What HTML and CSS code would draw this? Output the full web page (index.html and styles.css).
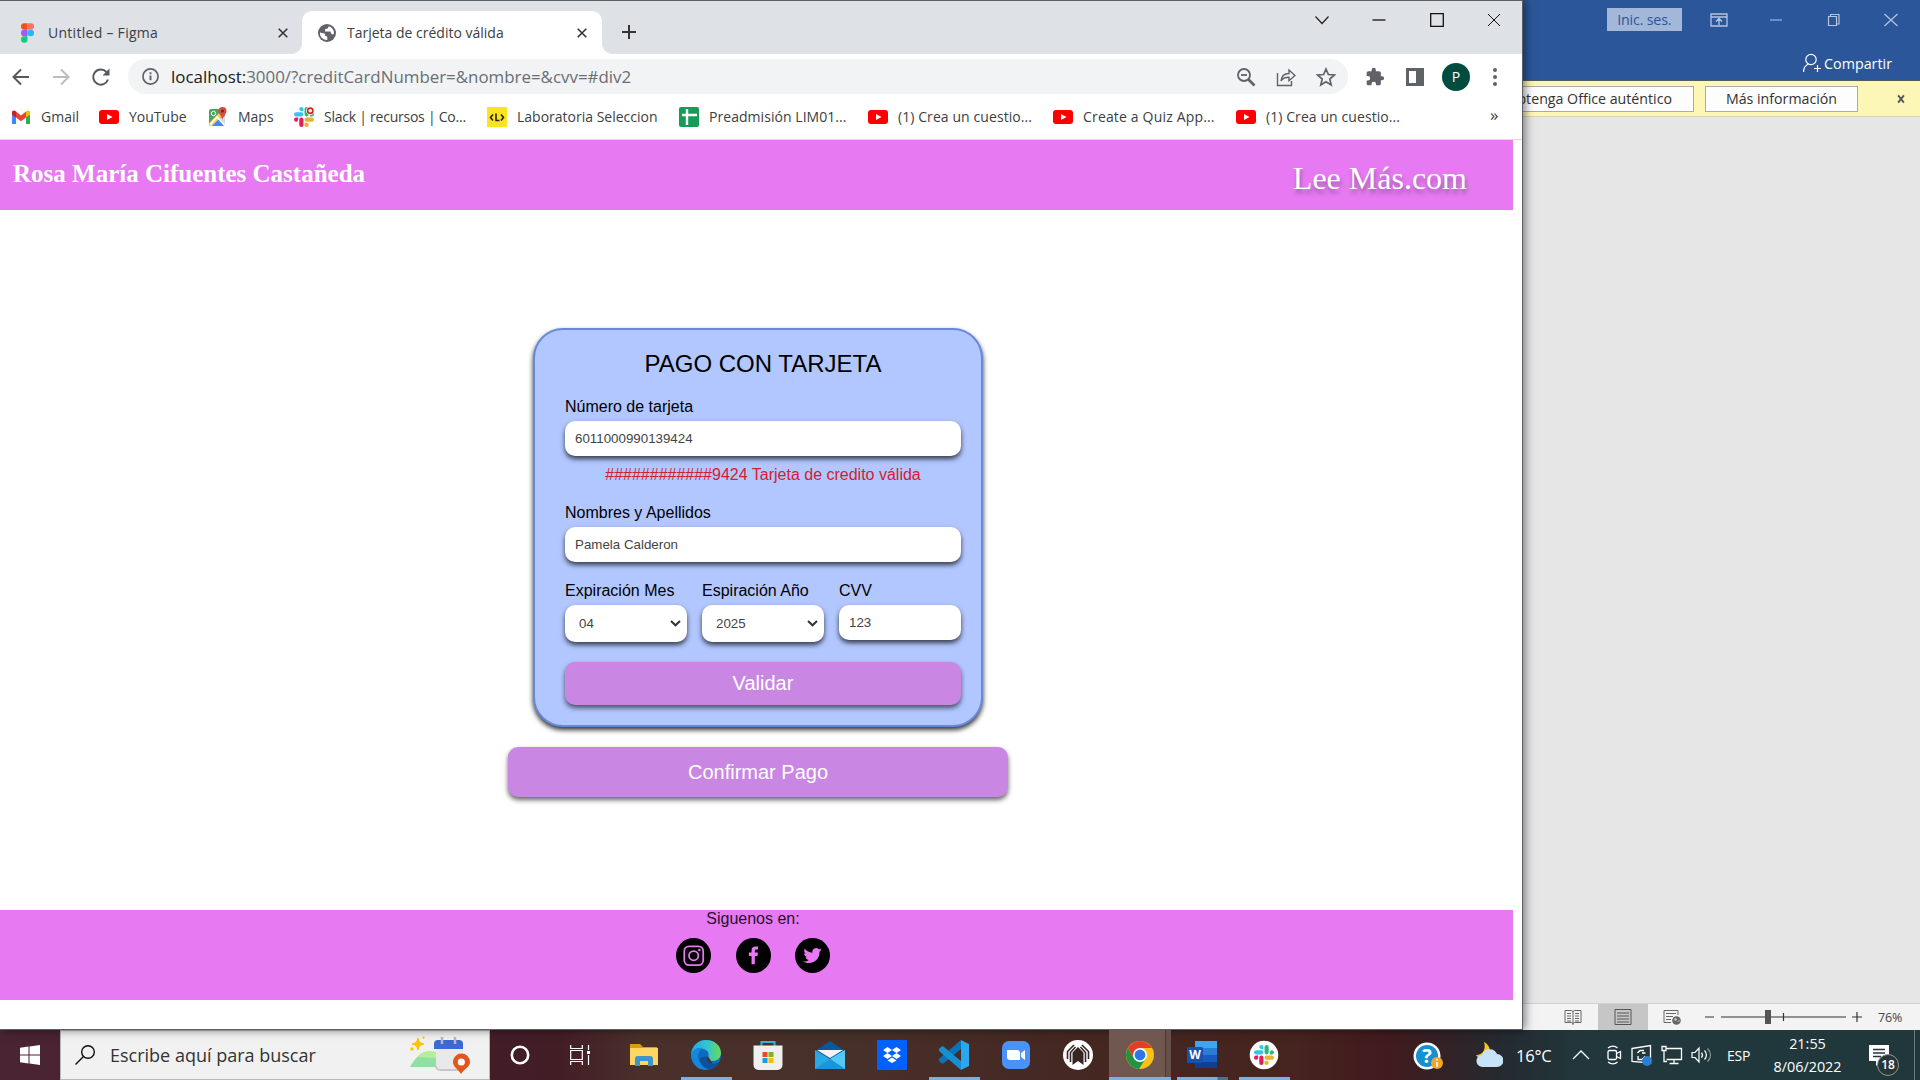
FILE: index.html
```html
<!DOCTYPE html>
<html lang="es">
<head>
<meta charset="utf-8">
<title>Tarjeta de crédito válida</title>
<link rel="stylesheet" href="styles.css">
</head>
<body>
<svg class="sprite" aria-hidden="true">
  <symbol id="close" viewBox="0 0 14 14"><path d="M1 1l12 12M13 1L1 13" fill="none" stroke="currentColor"/></symbol>
  <symbol id="youtube" viewBox="0 0 20 20"><rect y="3" width="20" height="14" rx="3" fill="#f00"/><path d="M8 7l5.5 3L8 13z" fill="#fff"/></symbol>
  <symbol id="slack" viewBox="0 0 24 24">
    <path fill="#e01e5a" d="M5.042 15.165a2.528 2.528 0 0 1-2.52 2.523A2.528 2.528 0 0 1 0 15.165a2.527 2.527 0 0 1 2.522-2.52h2.52v2.52zM6.313 15.165a2.527 2.527 0 0 1 2.521-2.52 2.527 2.527 0 0 1 2.521 2.520v6.313A2.528 2.528 0 0 1 8.834 24a2.528 2.528 0 0 1-2.521-2.522v-6.313z"/>
    <path fill="#36c5f0" d="M8.834 5.042a2.528 2.528 0 0 1-2.521-2.520A2.528 2.528 0 0 1 8.834 0a2.528 2.528 0 0 1 2.521 2.522v2.520H8.834zM8.834 6.313a2.528 2.528 0 0 1 2.521 2.521 2.528 2.528 0 0 1-2.521 2.521H2.522A2.528 2.528 0 0 1 0 8.834a2.528 2.528 0 0 1 2.522-2.521h6.312z"/>
    <path fill="#2eb67d" d="M18.956 8.834a2.528 2.528 0 0 1 2.522-2.521A2.528 2.528 0 0 1 24 8.834a2.528 2.528 0 0 1-2.522 2.521h-2.522V8.834zM17.688 8.834a2.528 2.528 0 0 1-2.523 2.521 2.527 2.527 0 0 1-2.520-2.521V2.522A2.527 2.527 0 0 1 15.165 0a2.528 2.528 0 0 1 2.523 2.522v6.312z"/>
    <path fill="#ecb22e" d="M15.165 18.956a2.528 2.528 0 0 1 2.523 2.522A2.528 2.528 0 0 1 15.165 24a2.527 2.527 0 0 1-2.520-2.522v-2.522h2.520zM15.165 17.688a2.527 2.527 0 0 1-2.520-2.523 2.526 2.526 0 0 1 2.520-2.520h6.313A2.527 2.527 0 0 1 24 15.165a2.528 2.528 0 0 1-2.522 2.523h-6.313z"/>
  </symbol>
</svg>

<div class="desktop">
  <main class="workspace">

    <section class="word">
      <header class="word-title">
        <div class="word-controls">
          <span class="signin">Inic. ses.</span>
          <svg class="wc" viewBox="0 0 18 14"><path d="M1 1h16v12H1zM1 4h16M9 12V6M6 8.500l3-3 3 3" fill="none" stroke="currentColor" stroke-width="1.300"/></svg>
          <svg class="wc" viewBox="0 0 18 14"><path d="M3 7h12" stroke="currentColor"/></svg>
          <svg class="wc" viewBox="0 0 18 14"><path d="M3.500 3.500h8v9h-8zM5.500 3V1.500h8.500V11h-2" fill="none" stroke="currentColor" stroke-width="1.200"/></svg>
          <svg class="wc" viewBox="0 0 18 14"><path d="M2.500 1l13 12M15.500 1l-13 12" stroke="currentColor" stroke-width="1.200"/></svg>
        </div>
        <div class="share">
          <svg width="20" height="20" viewBox="0 0 20 20" fill="none" stroke="#fff" stroke-width="1.200"><circle cx="9" cy="6.500" r="5.200"/><path d="M6.500 11C3 12.500 1.500 15 1.500 19M12 15.500h7M15.500 12v7"/></svg>
          Compartir
        </div>
      </header>
      <div class="license">
        <span class="license-btn wide">Obtenga Office auténtico</span>
        <span class="license-btn">Más información</span>
        <svg class="license-close" viewBox="0 0 14 14"><path d="M3 2l8 10M11 2L3 12" stroke="#555" stroke-width="2.600"/></svg>
      </div>
      <div class="document"></div>
      <footer class="word-status">
        <span class="view"><svg viewBox="0 0 18 16"><path d="M1 1.500h6.500L9 2.500l1.500-1H17v12h-6.500L9 14.500l-1.500-1H1zM9 2v14M3 4.500h4M3 7h4M3 9.500h4M3 12h4M11 4.500h4M11 7h4M11 9.500h4M11 12h4" fill="none" stroke="#666"/></svg></span>
        <span class="view active"><svg viewBox="0 0 18 16"><path d="M1 .500h16v15H1zM3 4h12M3 7h12M3 10h12M3 13h12" fill="none" stroke="#555"/></svg></span>
        <span class="view"><svg viewBox="0 0 18 16"><path d="M15 6V1.500H1v12h7M3 4.500h10M3 7.500h7M3 10.500h5" fill="none" stroke="#666"/><circle cx="13.500" cy="11.500" r="4.300" fill="#666"/><path d="M11 10l2-1 1 2-2 1zM14 13l2-2 1 1" fill="#ccc"/></svg></span>
        <svg class="slider" width="160" height="18" viewBox="0 0 160 18"><path d="M1 9h9M17 9h125M148 9h10M153 4v10M79.500 5v8" stroke="#333" stroke-width="1.200"/><rect x="61" y="2" width="6" height="14" fill="#555"/></svg>
        <span class="percent">76%</span>
      </footer>
    </section>

    <section class="chrome">
      <header class="tabs">
        <div class="tab">
          <svg class="favicon figma" width="13" height="20" viewBox="0 0 12 18"><path d="M3 0h3v6H3a3 3 0 010-6z" fill="#f24e1e"/><path d="M6 0h3a3 3 0 010 6H6z" fill="#ff7262"/><path d="M3 6h3v6H3a3 3 0 010-6z" fill="#a259ff"/><circle cx="9" cy="9" r="3" fill="#1abcfe"/><path d="M3 12h3v3a3 3 0 11-3-3z" fill="#0acf83"/></svg>
          <span class="tab-title">Untitled – Figma</span>
          <svg class="tab-close"><use href="#close"/></svg>
        </div>
        <div class="tab active">
          <svg class="favicon" width="18" height="18" viewBox="0 0 20 20"><circle cx="10" cy="10" r="10" fill="#5f6368"/><path d="M2.300 9.500l5.500 1.200v2.200l2.500 1.300v3.500C5.500 18 1.500 14 2.300 9.500zM12 2.500l-1 2.300-3.200 1v2.400h6l1.200 3.100h2.500c1-3.500-1.500-7.500-5.500-8.800z" fill="#fff"/></svg>
          <span class="tab-title">Tarjeta de crédito válida</span>
          <svg class="tab-close"><use href="#close"/></svg>
        </div>
        <svg class="new-tab" viewBox="0 0 16 16"><path d="M8 1v14M1 8h14" stroke="#333" stroke-width="2"/></svg>
        <div class="window-controls">
          <svg viewBox="0 0 14 14"><path d="M.5 3.500L7 10.500l6.500-7" fill="none" stroke="#222" stroke-width="1.200"/></svg>
          <svg viewBox="0 0 14 14"><path d="M.5 7h13" stroke="#111" stroke-width="1.300"/></svg>
          <svg viewBox="0 0 14 14"><path d="M.7.700h12.600v12.600H.7z" fill="none" stroke="#111" stroke-width="1.300"/></svg>
          <svg viewBox="0 0 14 14"><use href="#close" color="#111"/></svg>
        </div>
      </header>

      <nav class="toolbar">
        <div class="nav-buttons">
          <svg viewBox="0 0 20 20"><path d="M18 10H3M10 2.500L2.500 10l7.500 7.500" fill="none" stroke="#555a5f" stroke-width="2"/></svg>
          <svg viewBox="0 0 20 20"><path d="M2 10h15M10 2.500l7.500 7.500-7.500 7.500" fill="none" stroke="#babcbe" stroke-width="2"/></svg>
          <svg viewBox="0 0 20 20"><path d="M17 12.500A7.600 7.600 0 1115.500 5" fill="none" stroke="#555a5f" stroke-width="2"/><path d="M18.500 1.500v7h-7z" fill="#555a5f"/></svg>
        </div>
        <div class="omnibox">
          <svg width="17" height="17" viewBox="0 0 18 18"><circle cx="9" cy="9" r="8" fill="none" stroke="#5f6368" stroke-width="1.800"/><path d="M9 8v5M9 4.500v2" stroke="#5f6368" stroke-width="2"/></svg>
          <span class="url"><b>localhost:</b>3000/?creditCardNumber=&amp;nombre=&amp;cvv=#div2</span>
          <div class="omni-icons">
            <svg viewBox="0 0 20 20"><g fill="none" stroke="#5f6368" stroke-width="1.800"><circle cx="8" cy="8" r="6"/><path d="M5 8h6"/></g><path d="M12.500 12.500l6 6" stroke="#5f6368" stroke-width="2.600"/></svg>
            <svg viewBox="0 0 20 20"><path d="M1.500 6v12.500h14V14M5 14c.500-5 3-7.500 8-7.500V3l6 5.500-6 5.200v-3.500c-4 0-6.500 1-8 3.800z" fill="none" stroke="#5f6368" stroke-width="1.400"/></svg>
            <svg viewBox="0 0 20 20"><path d="M10 2l2.400 5.500 6 .5-4.600 4 1.400 6-5.200-3.200L4.800 18l1.400-6-4.600-4 6-.5z" fill="none" stroke="#5f6368" stroke-width="1.700"/></svg>
          </div>
        </div>
        <div class="extensions">
          <svg width="20" height="20" viewBox="0 0 24 24"><path d="M20.500 11H19V7a2 2 0 00-2-2h-4V3.500a2.500 2.500 0 00-5 0V5H4a2 2 0 00-2 2v3.800h1.500a2.700 2.700 0 010 5.400H2V20a2 2 0 002 2h3.800v-1.500a2.700 2.700 0 015.400 0V22H17a2 2 0 002-2v-4h1.500a2.500 2.500 0 000-5z" fill="#5f6368"/></svg>
          <svg width="18" height="18" viewBox="0 0 18 18"><path d="M0 0h18v18H0zM3 3v12h7V3z" fill="#5f6368" fill-rule="evenodd"/></svg>
          <span class="avatar">P</span>
          <svg class="dots" width="4" height="18" viewBox="0 0 4 18"><g fill="#5f6368"><circle cx="2" cy="2" r="2"/><circle cx="2" cy="9" r="2"/><circle cx="2" cy="16" r="2"/></g></svg>
        </div>
      </nav>

      <nav class="bookmarks">
        <a class="bm gmail"><svg viewBox="0 0 20 20"><path d="M1 4v13h4V9z" fill="#4285f4"/><path d="M15 9v8h4V4z" fill="#34a853"/><path d="M5 4.500v6l5 3.700 5-3.700v-6l-5 4z" fill="#ea4335"/><path d="M1 5.500v2L5 10.500v-6C3 2.500 1 3.500 1 5.500z" fill="#c5221f"/><path d="M19 5.500v2l-4 3v-6c2-2 4-1 4 1z" fill="#fbbc04"/></svg><span>Gmail</span></a>
        <a class="bm yt"><svg><use href="#youtube"/></svg><span>YouTube</span></a>
        <a class="bm maps"><svg viewBox="0 0 20 20"><rect x="1" y="2" width="16" height="17" rx="2" fill="#4fa35e"/><path d="M3 19l7-7 7 7z" fill="#4b86ec"/><path d="M1 16L14 3l3 3L4 19H2z" fill="#f5d25c"/><path d="M10 12l7 7V9z" fill="#dadde0"/><path d="M2 18l7-8 8 9" fill="none" stroke="#fff" stroke-width="1.500"/><circle cx="5.500" cy="6.500" r="2.200" fill="none" stroke="#fff"/><path d="M14.500 0a4 4 0 014 4c0 3-3 5-4 8.500C13.500 9 10.500 7 10.500 4a4 4 0 014-4z" fill="#dc4b3f"/><circle cx="14.500" cy="4" r="1.500" fill="#7d221c"/></svg><span>Maps</span></a>
        <a class="bm slk"><svg viewBox="0 0 24 24"><use href="#slack"/><circle cx="19.500" cy="4.500" r="5" fill="#fff"/><circle cx="19.500" cy="4.500" r="3.200" fill="#fff" stroke="#e02020" stroke-width="2"/></svg><span>Slack | recursos | Co...</span></a>
        <a class="bm lab"><svg viewBox="0 0 20 20"><path d="M0 0h20v20H0z" fill="#fbe41e"/><path d="M6 7.500L3.500 10.500 6 13.500M14 7.500l2.500 3-2.500 3M9 6.500v7h3.500" fill="none" stroke="#222" stroke-width="1.600"/></svg><span>Laboratoria Seleccion</span></a>
        <a class="bm sheet"><svg viewBox="0 0 20 20"><rect width="20" height="20" rx="2" fill="#179c58"/><path d="M8 2v16M3 8h15" stroke="#fff" stroke-width="2.400"/></svg><span>Preadmisión LIM01...</span></a>
        <a class="bm quiz1"><svg><use href="#youtube"/></svg><span>(1) Crea un cuestio...</span></a>
        <a class="bm quiz2"><svg><use href="#youtube"/></svg><span>Create a Quiz App...</span></a>
        <a class="bm quiz3"><svg><use href="#youtube"/></svg><span>(1) Crea un cuestio...</span></a>
        <span class="more">»</span>
      </nav>

      <div class="page">
        <header class="site-header">
          <h1 class="owner">Rosa María Cifuentes Castañeda</h1>
          <p class="brand">Lee Más.com</p>
        </header>
        <div class="payment">
          <form class="card">
            <h2 class="card-title">PAGO CON TARJETA</h2>
            <label class="row"><span>Número de tarjeta</span><input class="field" value="6011000990139424"></label>
            <p class="message">############9424 Tarjeta de credito válida</p>
            <label class="row"><span>Nombres y Apellidos</span><input class="field" value="Pamela Calderon"></label>
            <div class="expiry">
              <label><span>Expiración Mes</span><select class="field select"><option>04</option></select></label>
              <label><span>Espiración Año</span><select class="field select"><option>2025</option></select></label>
              <label><span>CVV</span><input class="field" value="123"></label>
            </div>
            <button class="btn validate" type="button">Validar</button>
          </form>
          <button class="btn confirm" type="button">Confirmar Pago</button>
        </div>
        <footer class="site-footer">
          <p>Siguenos en:</p>
          <div class="social">
            <svg viewBox="0 0 36 36"><circle cx="18" cy="18" r="18"/><g fill="none" stroke="#e77af2" stroke-width="1.800"><rect x="8.500" y="8.500" width="19.500" height="19.500" rx="5"/><circle cx="18.200" cy="18.200" r="4.800"/></g><circle cx="24" cy="12.400" r="1.300" fill="#e77af2"/></svg>
            <svg viewBox="0 0 36 36"><circle cx="18" cy="18" r="18"/><path d="M16 27v-8.500h-2.800V15H16v-2.500c0-2.500 1.500-3.800 4-3.800h2.600v3.200H21c-1.200 0-1.600.5-1.600 1.500V15h3.200l-.5 3.500h-2.700V27z" fill="#e77af2"/></svg>
            <svg viewBox="0 0 36 36"><circle cx="18" cy="18" r="18"/><path d="M27.500 12.200c-.7.300-1.400.5-2.200.6.800-.5 1.400-1.200 1.700-2.100-.8.400-1.600.8-2.500.9a3.900 3.900 0 00-6.600 3.500c-3.200-.2-6-1.700-7.900-4-1 1.700-.6 4 1.100 5.200-.6 0-1.200-.2-1.700-.5 0 1.800 1.200 3.500 3.100 3.900-.6.200-1.200.2-1.800.1.500 1.500 1.900 2.600 3.600 2.700a7.800 7.800 0 01-5.700 1.600c6.900 4.300 16.800 0 16.700-9.900.8-.6 1.500-1.200 2.200-2z" fill="#e77af2"/></svg>
          </div>
        </footer>
      </div>
    </section>
  </main>

  <footer class="taskbar">
    <div class="start"><svg width="20" height="20" viewBox="0 0 20 20"><path d="M0 2.800l8.500-1.200v8H0zM9.500 1.500L20 0v9.500H9.500zM0 10.500h8.500v8L0 17.300zM9.500 10.500H20V20l-10.500-1.500z" fill="#fff"/></svg></div>
    <div class="search">
      <svg width="20" height="20" viewBox="0 0 20 20"><circle cx="13" cy="7" r="6.300" fill="none" stroke="#111" stroke-width="1.400"/><path d="M8.500 11.500L.5 19.500" stroke="#111" stroke-width="1.400"/></svg>
      <span>Escribe aquí para buscar</span>
      <svg class="highlight" width="62" height="40" viewBox="0 0 62 40">
        <path d="M9 3l1.600 4.400L15 9l-4.400 1.600L9 15l-1.600-4.400L3 9l4.400-1.600z" fill="#ffc400" stroke="#ffc400"/><circle cx="3" cy="14" r="1.700" fill="#ffc400"/><circle cx="14.500" cy="2.500" r="1.200" fill="#f5c95b"/>
        <path d="M1 32c6-10 12-18 26-15v15z" fill="#91dfa3"/><path d="M8 22c6-6 12-7 20-4v5z" fill="#b4ef9c"/>
        <rect x="27" y="7" width="27" height="28" rx="4" fill="#e9e9eb"/><path d="M27 31v0a4 4 0 004 4h19" stroke="#c8c8ca" stroke-width="2" fill="none"/><path d="M25 14V9a4 4 0 014-4h21a4 4 0 014 4v5z" fill="#3d68d8"/><path d="M33 2v7M46 2v7" stroke="#b4b8c4" stroke-width="2.500"/>
        <path d="M52 39c-3-5-8-7-8-12a8.500 8.500 0 0117 0c0 5-6 7-9 12z" fill="#e2561b"/><circle cx="52.300" cy="27" r="3.600" fill="#fff"/>
      </svg>
    </div>
    <div class="apps">
      <span class="app cortana"><svg width="20" height="20" viewBox="0 0 20 20"><circle cx="10" cy="10" r="8.200" fill="none" stroke="#fff" stroke-width="2.600"/></svg></span>
      <span class="app taskview"><svg width="20" height="20" viewBox="0 0 20 20"><path d="M.7 0v3.500h11.600V0M.7 20v-3.500h11.600V20M.7 5.500h11.600v9H.7zM18.500 0v5M18.500 10v10" fill="none" stroke="#fff" stroke-width="1.200"/><rect x="17" y="6" width="3" height="3" fill="#fff"/></svg></span>
      <span class="app"><svg viewBox="0 0 30 30"><path d="M1 4h10l3 3h14v5H1z" fill="#dc9c11"/><path d="M1 8h28v17H1z" fill="#fdd663"/><path d="M6 26v-7a3 3 0 013-3h12a3 3 0 013 3v7h-5v-5h-8v5z" fill="#4193cf"/></svg></span>
      <span class="app running"><svg viewBox="0 0 30 30"><defs><linearGradient id="edgeTop"><stop stop-color="#27a9df"/><stop offset=".55" stop-color="#34c4cf"/><stop offset="1" stop-color="#68dc54"/></linearGradient></defs><circle cx="15" cy="15" r="15" fill="#0c6bc0"/><path d="M0 14C1 6 7 0 15 0c9 0 15 6 15 13 0 5-4 8-8 8s-6-2-5-4c2-4-1-8-6-8C6 9 2 11 0 14z" fill="url(#edgeTop)"/><path d="M0 14c2-5 7-7 12-6-5 3-7 9-3 15 2 4 6 6 9 6C8 32 0 24 0 14z" fill="#1688dc"/><path d="M17 16c-3 4 0 8 5 8 3 0 5-1 7-2l1-3v9h-6z" fill="#47312a"/><path d="M9 18c0 7 5 11 10 11 3 0 8-3 9-6-8 3-13-1-12-7z" fill="#0c519c"/></svg></span>
      <span class="app"><svg viewBox="0 0 30 30"><path d="M8.500 8V2h13v6" fill="none" stroke="#37b0df" stroke-width="2"/><path d="M.5 5.500h29V25a5 5 0 01-5 5h-19a5 5 0 01-5-5z" fill="#efefef"/><path d="M9.500 12h5v5h-5z" fill="#e74c26"/><path d="M15.500 12h5v5h-5z" fill="#7fb516"/><path d="M9.500 18h5v5h-5z" fill="#159fe5"/><path d="M15.500 18h5v5h-5z" fill="#f8b913"/></svg></span>
      <span class="app"><svg viewBox="0 0 30 30"><path d="M0 11L15 1l15 10v7H0z" fill="#0b579e"/><path d="M0 10l15 9 15-9v19H0z" fill="#29a8e6"/><path d="M2 10h26l-13 8z" fill="#f4f4f4"/><path d="M15 19l15-9v19z" fill="#55c7f4"/><path d="M15 19l15 10H0z" fill="#1696dc"/></svg></span>
      <span class="app"><svg viewBox="0 0 30 30"><path d="M0 0h30v30H0z" fill="#0061fe"/><path d="M10.500 7l4.500 3-4.500 3L6 10zM19.500 7l4.500 3-4.500 3-4.500-3zM10.500 13l4.500 3-4.500 3L6 16zM19.500 13l4.500 3-4.500 3-4.500-3zM15 17.500l4.500 3L15 23l-4.500-2.500z" fill="#fff"/></svg></span>
      <span class="app running"><svg viewBox="0 0 30 30"><path d="M22 0v9L5 23c-1 1-2 1-3 0l-1.500-1.500c-1-1-1-2 0-3z" fill="#0873b8"/><path d="M22 30v-9L5 7C4 6 3 6 2 7L.5 8.500c-1 1-1 2 0 3z" fill="#178fd2"/><path d="M22 0l8 4v22l-8 4z" fill="#2ba7ee"/></svg></span>
      <span class="app"><svg viewBox="0 0 30 30"><rect x="1" y="1" width="28" height="28" rx="7" fill="#4b91fa"/><path d="M6 10h10a3 3 0 013 3v7H9a3 3 0 01-3-3zM20 13l4-3v10l-4-3z" fill="#fff"/></svg></span>
      <span class="app"><svg viewBox="0 0 30 30"><circle cx="15" cy="15" r="15" fill="#fff"/><path d="M4.500 19V11.500L11 5M25.500 19V11.500L19 5M7.500 22V12.500L12.500 7M22.500 22V12.500L17.500 7" fill="none" stroke="#382622" stroke-width="1.600"/><path d="M9.500 25V12.500L15 7l5.500 5.500V25L15 21z" fill="#382622"/></svg></span>
      <span class="app running current"><svg viewBox="0 0 30 30"><circle cx="15" cy="15" r="14" fill="#fbc116"/><path d="M2.900 8A14 14 0 0127.100 8H15l-6 10z" fill="#e33b2e"/><path d="M2.900 8A14 14 0 0014 29l7-11H9z" fill="#229342"/><circle cx="15" cy="15" r="7" fill="#fff"/><circle cx="15" cy="15" r="5.400" fill="#2d76e8"/></svg></span>
      <span class="app running grouped"><svg viewBox="0 0 30 30"><path d="M8 1h22v7H8z" fill="#41a5ee"/><path d="M8 8h22v7H8z" fill="#2b7cd3"/><path d="M8 15h22v7H8z" fill="#185abd"/><path d="M8 22h22v6H8z" fill="#103f91"/><rect x="0" y="7" width="16" height="16" rx="1.500" fill="#1951ad"/><text x="8" y="19" text-anchor="middle" class="word-letter">W</text></svg></span>
      <span class="app running"><svg viewBox="0 0 30 30"><circle cx="15" cy="15" r="14.300" fill="#fff"/><use href="#slack" x="5" y="5" width="20" height="20"/></svg></span>
    </div>
    <div class="tray">
      <svg class="help" width="30" height="30" viewBox="0 0 30 30"><circle cx="14" cy="14" r="13.500" fill="#fff"/><circle cx="14" cy="14" r="11" fill="#168fd0"/><text x="14" y="21" text-anchor="middle" class="help-mark">?</text><circle cx="24" cy="21" r="6" fill="#f3a526"/><path d="M24 20v5M24 17v1.500" stroke="#fff" stroke-width="1.600"/></svg>
      <svg class="weather" width="28" height="26" viewBox="0 0 28 26"><path d="M9 0c6 3 8 10 3 15-4 3-9 2-11-2 8 0 10-7 8-13z" fill="#f9c522"/><path d="M8 25a6 6 0 01-1-12 8 8 0 0115-1 6.500 6.500 0 010 13z" fill="#c7e3fa"/></svg>
      <span class="temp">16°C</span>
      <svg class="chev" width="18" height="12" viewBox="0 0 18 12"><path d="M1 10l8-8 8 8" fill="none" stroke="#fff" stroke-width="1.300"/></svg>
      <svg class="t1" width="16" height="20" viewBox="0 0 16 20" fill="none" stroke="#fff" stroke-width="1.300"><rect x="2" y="5.500" width="8.500" height="9" rx="1.500"/><path d="M10.500 8.500l4-2v7l-4-2M2 3c3-2.500 7-2.500 9.500 0M2 17c3 2.500 7 2.500 9.500 0"/></svg>
      <svg class="t2" width="22" height="22" viewBox="0 0 22 22"><path d="M1 4.500l18.500-3V19L1 17.500z" fill="none" stroke="#fff" stroke-width="1.300"/><path d="M13 6.500H9L6.500 9M7 12v3.500h4l3-3M11 9h3.500" fill="none" stroke="#fff" stroke-width="1.300"/><circle cx="16" cy="17" r="5" fill="#2d7dd2"/></svg>
      <svg class="t3" width="22" height="20" viewBox="0 0 22 20"><path d="M5.500 3.500h15v11h-15M13 14.500v4M8.500 18.500h9M1 1.500h4v4H1zM3 5.500v11h3" fill="none" stroke="#fff" stroke-width="1.300"/></svg>
      <svg class="t4" width="22" height="18" viewBox="0 0 22 18" fill="none" stroke="#fff" stroke-width="1.200"><path d="M1 6.500h3L8 2v14l-4-4.500H1zM10.500 6.500a4 4 0 010 5M13.500 4.500c2.500 2.500 2.500 6.500 0 9"/><path d="M16.500 2.500c4 4 4 9 0 13" opacity=".5"/></svg>
      <span class="lang">ESP</span>
      <div class="clock"><span>21:55</span><span>8/06/2022</span></div>
      <div class="notif"><svg width="22" height="22" viewBox="0 0 22 22"><path d="M0 0h20v16h-8l-5 5v-5H0z" fill="#fff"/><path d="M4 4.500h12M4 8h12M4 11.500h8" stroke="#22383c" stroke-width="1.300"/></svg><span class="count">18</span></div>
    </div>
  </footer>
</div>
</body>
</html>
```
FILE: styles.css
```css
* { box-sizing: border-box; }
body { margin: 0; font-family: "Open Sans", "Noto Sans", sans-serif; font-size: 14px; color: #3c4043; }
h1, h2, p { margin: 0; font-weight: normal; }
svg { display: block; flex: none; }
.sprite { position: absolute; width: 0; height: 0; }
.desktop { width: 1920px; height: 1080px; overflow: hidden; display: flex; flex-direction: column; }
.workspace { position: relative; height: 1030px; }

/* Word window */
.word { height: 1030px; padding-left: 1500px; display: flex; flex-direction: column; background: #e6e6e6; }
.word-title { height: 81px; background: #2b579a; border-bottom: 1px solid #4d5f57; display: flex; flex-direction: column; }
.word-controls { height: 39px; flex: none; display: flex; align-items: center; justify-content: flex-end; padding-right: 20px; gap: 39.300px; color: #b4c5e0; }
.wc { width: 18px; height: 14px; }
.signin { width: 75px; height: 23px; line-height: 23px; margin-right: -11px; background: #a3b8d8; color: #2b579a; text-align: center; font-size: 14.300px; letter-spacing: -.2px; }
.share { display: flex; align-items: center; justify-content: flex-end; gap: 2px; height: 48px; flex: none; padding-right: 28px; color: #fff; font-size: 14.300px; }
.license { height: 36px; background: #fcf7b6; border-bottom: 1px solid #d8d6a4; display: flex; align-items: center; justify-content: flex-end; gap: 11px; padding-right: 12px; color: #333; }
.license-btn { flex: none; width: 153px; height: 26px; border: 1px solid #ababab; background: #fdfdfd; text-align: center; line-height: 24px; font-size: 14.200px; white-space: nowrap; }
.license-btn.wide { width: 194px; padding-right: 21px; text-align: right; }
.license-close { width: 14px; height: 10px; margin-left: 25px; }
.document { flex: 1; }
.word-status { height: 27px; background: #f3f3f3; border-top: 1px solid #d0d0d0; display: flex; align-items: center; justify-content: flex-end; padding-right: 16px; }
.view { width: 49.500px; height: 26px; display: flex; align-items: center; justify-content: center; }
.view svg { width: 18px; height: 16px; }
.view.active { background: #c6c6c6; }
.slider { margin: 0 14px 0 7px; }
.percent { width: 26px; font-size: 12.500px; letter-spacing: -.2px; color: #444; }

/* Browser window */
.chrome { position: absolute; left: 0; top: 0; width: 1523px; height: 1030px; background: #fff; border: solid #5d5f66; border-width: 1px 1px 1px 0; box-shadow: 2px 0 9px rgba(0,0,0,.5); display: flex; flex-direction: column; }
.tabs { height: 53px; background: #dee1e6; display: flex; align-items: flex-end; color: #3c4043; }
.tab { position: relative; height: 43px; width: 302px; display: flex; align-items: center; padding: 0 14px 0 21px; }
.tab.active { width: 300px; padding: 0 15px 0 16px; background: #fff; border-radius: 10px 10px 0 0; }
.tab.active::before, .tab.active::after { content: ""; position: absolute; bottom: 0; width: 10px; height: 10px; background: radial-gradient(circle at 0 0, transparent 9.500px, #fff 10px); }
.tab.active::before { left: -10px; }
.tab.active::after { right: -10px; transform: scaleX(-1); }
.tab-title { margin-left: 14px; flex: 1; font-size: 14px; letter-spacing: .28px; white-space: nowrap; }
.tab.active .tab-title { margin-left: 11px; letter-spacing: 0; }
.tab-close { width: 10px; height: 10px; stroke-width: 2.200; color: #333; }
.new-tab { width: 16px; height: 16px; margin: 0 0 14px 19px; }
.window-controls { margin-left: auto; height: 53px; display: flex; gap: 43.300px; padding: 12px 21px 0 0; }
.window-controls svg { width: 14px; height: 14px; }
.toolbar { height: 45px; display: flex; align-items: center; }
.nav-buttons { width: 128px; display: flex; gap: 20px; padding-left: 11px; }
.nav-buttons svg { width: 20px; height: 20px; }
.omnibox { width: 1220px; height: 35px; border-radius: 18px; background: #f1f3f4; display: flex; align-items: center; padding: 0 12.500px 0 14px; }
.url { margin-left: 12px; flex: 1; font-size: 16.900px; color: #6a6e73; line-height: 34px; white-space: nowrap; }
.url b { font-weight: normal; color: #202124; }
.omni-icons { display: flex; gap: 20px; }
.omni-icons svg { width: 20px; height: 20px; }
.extensions { display: flex; align-items: center; padding-left: 17px; }
.extensions svg + svg { margin-left: 21px; }
.avatar { width: 28px; height: 28px; margin: 0 23px 0 18px; border-radius: 50%; background: #004d40; color: #fff; text-align: center; line-height: 28px; font-size: 14px; }
.bookmarks { height: 41px; padding: 0 0 5px 11px; border-bottom: 1px solid #dcdcde; display: flex; align-items: center; }
.bm { display: flex; align-items: center; }
.bm svg { width: 20px; height: 20px; margin-right: 10px; }
.bm span { white-space: nowrap; font-size: 14px; }
.bm.slk span { letter-spacing: -.24px; }
.bm.sheet span { letter-spacing: .05px; }
.bm.quiz1 span, .bm.quiz3 span { letter-spacing: .08px; }
.bm.quiz2 span { letter-spacing: .17px; }
.gmail { width: 88px; } .yt { width: 109px; } .maps { width: 86px; } .slk { width: 193px; } .lab { width: 192px; }
.sheet { width: 189px; } .quiz1 { width: 185px; } .quiz2 { width: 183px; } .quiz3 { width: 200px; }
.more { margin-left: 54px; font-size: 17px; line-height: 20px; margin-top: -3px; }

/* Payment page */
.page { width: 1513px; flex: 1; font-family: "Liberation Sans", Arial, sans-serif; font-size: 16px; line-height: 18px; color: #000; display: flex; flex-direction: column; }
.site-header { height: 70px; background: #e77af2; color: #fff; font-family: "Liberation Serif", "Times New Roman", serif; display: flex; justify-content: space-between; padding: 0 46px 0 13px; }
.owner { font-size: 25px; font-weight: bold; line-height: 68px; }
.brand { font-size: 32px; line-height: 76px; text-shadow: 1px 4px 4px rgba(70,60,90,.5); }
.payment { height: 700px; padding: 118px 0 0 508px; width: 1008px; display: flex; flex-direction: column; align-items: center; gap: 20px; }
.card { width: 450px; height: 399px; padding: 20px 20px 20px 30px; border: 2px solid #6689dc; border-radius: 30px; background: #b2c7ff; box-shadow: 0 3px 5px rgba(0,0,0,.8); display: flex; flex-direction: column; }
.card-title { font-size: 24px; line-height: 28px; text-align: center; margin-bottom: 20px; }
.card label { display: flex; flex-direction: column; gap: 5px; }
.field { width: 100%; height: 35px; border: 0; border-radius: 10px; padding: 0 10px; background: #fff; color: #444; font: 13.333px "Liberation Sans", Arial, sans-serif; box-shadow: 0 3px 5px rgba(0,0,0,.7); }
.select { height: 37px; padding: 0 14px; appearance: none; background: #fff url("data:image/svg+xml,%3Csvg xmlns='http://www.w3.org/2000/svg' width='11' height='7' viewBox='0 0 11 7'%3E%3Cpath d='M1 1l4.500 4.300L10 1' fill='none' stroke='%23333' stroke-width='2'/%3E%3C/svg%3E") no-repeat right 6px center; }
.message { margin: 10px 0 20px; text-align: center; color: #d4202e; }
.expiry { margin: 20px 0; display: grid; grid-template-columns: repeat(3, 122px); gap: 15px; align-items: start; }
.btn { border: 0; padding: 0; border-radius: 10px; background: #ca86e3; color: #fff; font: 20px "Liberation Sans", Arial, sans-serif; box-shadow: 0 3px 5px rgba(0,0,0,.6); }
.validate { height: 43px; }
.confirm { width: 500px; height: 50px; flex: none; }
.site-footer { height: 90px; background: #e77af2; padding-right: 7px; text-align: center; }
.site-footer p { color: #28102c; }
.social { display: flex; justify-content: center; gap: 24.500px; margin-top: 10px; }
.social svg { width: 35px; height: 35px; }

/* Taskbar */
.taskbar { height: 50px; display: flex; color: #fff; background: linear-gradient(90deg, #4a2432 0, #421d27 490px, #431d26 560px, #49302a 640px, #48302a 850px, #452823 1050px, #46241f 1290px, #411a1d 1385px, #252a2f 1500px, #21373c 1580px, #20383c 1920px); }
.start { width: 60px; display: flex; align-items: center; justify-content: center; }
.search { width: 430px; background: #f1f1f1; border: 1px solid #b8b8b8; display: flex; align-items: center; padding: 0 18px 0 14px; color: #333; font-size: 18px; }
.search span { margin-left: 15px; flex: 1; white-space: nowrap; }
.apps { display: flex; }
.app { width: 62px; position: relative; display: flex; align-items: center; justify-content: center; }
.app.cortana { width: 60px; }
.app.taskview { width: 60px; margin-right: 3px; }
.app svg { width: 30px; height: 30px; }
.app.cortana svg, .app.taskview svg { width: 20px; height: 20px; }
.app.running::after { content: ""; position: absolute; left: 6px; right: 5px; bottom: 0; height: 3px; background: #76b0e5; }
.app.current { background: linear-gradient(90deg, #705750 56px, #4c3732 56px, #4c3732 57px, #675049 57px); }
.app.current::after { left: 0; right: 0; }
.app.grouped::after { background: linear-gradient(90deg, #76b0e5 40px, #4c718f 41px); }
.word-letter { font: bold 12px "Open Sans", sans-serif; fill: #fff; }
.help-mark { font: bold 20px "Open Sans", sans-serif; fill: #fff; }
.tray { margin-left: auto; display: flex; align-items: center; }
.help { margin-top: 3px; }
.weather { margin: 0 13px 0 32px; }
.temp { width: 40px; font-size: 16.500px; letter-spacing: -.2px; white-space: nowrap; }
.chev { margin: 0 16px; }
.t1 { margin-right: 9px; } .t2 { margin-right: 8px; } .t3 { margin-right: 8px; }
.lang { width: 29px; margin-left: 14px; font-size: 14px; letter-spacing: -.2px; }
.clock { width: 103px; display: flex; flex-direction: column; align-items: center; font-size: 14.400px; line-height: 23px; }
.notif { width: 61px; height: 50px; position: relative; padding: 15px 0 0 10px; }
.notif::after { content: ""; position: absolute; right: 5px; top: 0; width: 1px; height: 50px; background: #6c7b7e; }
.count { position: absolute; left: 18px; top: 24px; width: 22px; height: 22px; border-radius: 50%; border: 1px solid #8c9699; background: #2a3538; font-size: 12px; font-weight: 600; line-height: 20px; text-align: center; }
```
